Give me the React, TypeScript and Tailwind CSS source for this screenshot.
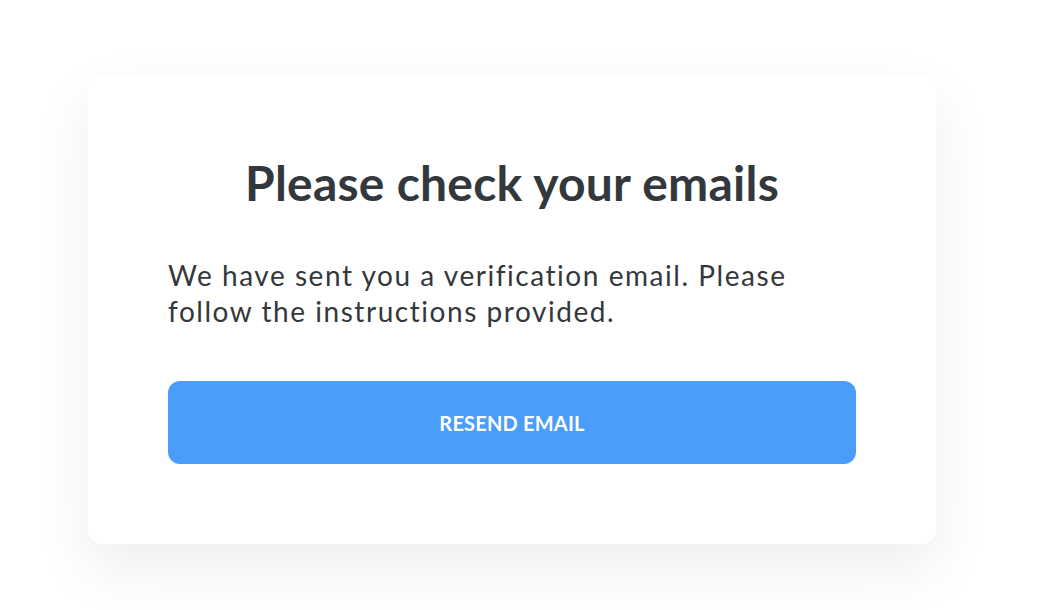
export default function App() {
  return (
    <div className="min-h-screen bg-white pt-[75px] pl-[88px]" style={{ fontFamily: 'Lato, "Noto Sans", sans-serif' }}>
      <div className="w-[848px] rounded-[14px] bg-white px-20 pt-[80px] pb-20 shadow-[0_24px_60px_rgba(0,0,0,0.07)]">
        <h1 className="text-center text-[48px] font-bold leading-[56px] tracking-[0.005em] text-[#33383c]">
          Please check your emails
        </h1>
        <p className="mt-[46px] text-[28px] leading-[36px] tracking-[0.055em] text-[#33383c]">
          We have sent you a verification email. Please
          <br />
          follow the instructions provided.
        </p>
        <button className="mt-[52px] flex h-[83px] w-full items-center justify-center rounded-[12px] bg-[#4a9df8] text-[20px] font-bold tracking-[0.01em] text-white">
          RESEND EMAIL
        </button>
      </div>
    </div>
  );
}
